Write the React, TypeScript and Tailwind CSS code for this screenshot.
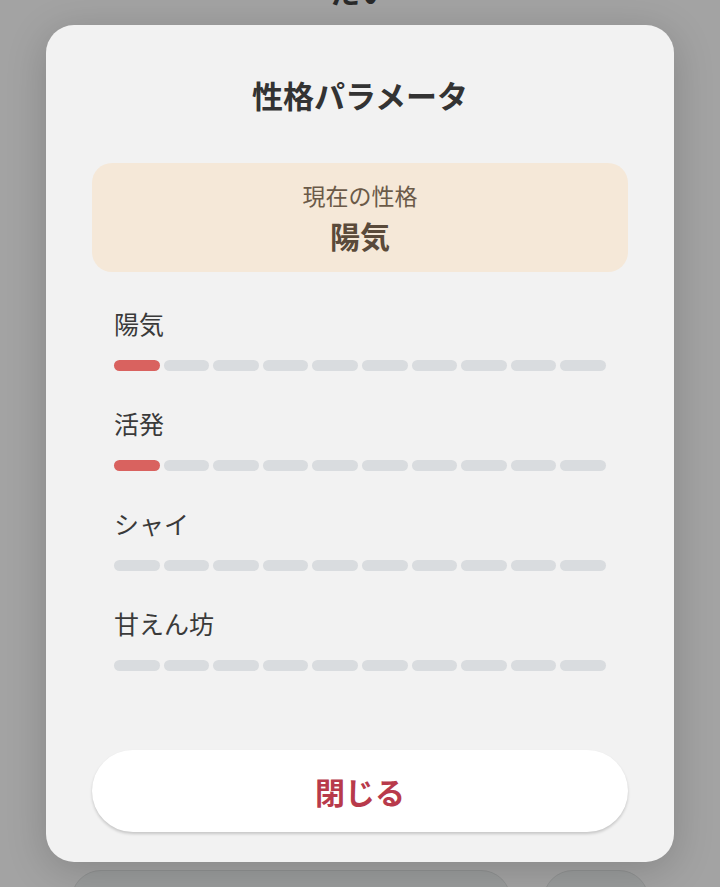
import React from "react";

const params = [
  { label: "陽気", value: 1 },
  { label: "活発", value: 1 },
  { label: "シャイ", value: 0 },
  { label: "甘えん坊", value: 0 },
];

function Bar({ value }: { value: number }) {
  return (
    <div className="flex gap-[4px]">
      {Array.from({ length: 10 }).map((_, i) => (
        <div
          key={i}
          className={
            i < value
              ? "h-[11px] flex-1 rounded-full bg-[#d9625f]"
              : "h-[11px] flex-1 rounded-full bg-[#d9dcdf]"
          }
        />
      ))}
    </div>
  );
}

export default function App() {
  return (
    <div
      className="relative w-[720px] h-[887px] overflow-hidden bg-[#a3a3a3]"
      style={{ fontFamily: '"Noto Sans CJK JP", "Noto Sans", sans-serif' }}
    >
      {/* dimmed background page */}
      <div className="flex flex-col items-center h-full">
        <div className="mt-[-30px] text-[30px] font-bold leading-[40px] text-[#2a2a2a]">たい</div>
        <div className="flex-1" />
        <div className="flex gap-[32px] w-full px-[71px] mb-[-43px]">
          <div className="h-[60px] w-[441px] rounded-[30px] bg-[#9a9c9c] border border-[#909292]" />
          <div className="h-[60px] w-[106px] rounded-[30px] bg-[#9a9c9c] border border-[#909292]" />
        </div>
      </div>

      {/* modal */}
      <div className="absolute left-[46px] top-[25px] w-[628px] h-[837px] rounded-[28px] bg-[#f2f2f2] shadow-[0_8px_40px_rgba(0,0,0,0.18)] px-[46px] pb-[30px] flex flex-col">
        <h2 className="mt-[50px] text-center text-[31px] leading-[40px] font-bold text-[#333333]">
          性格パラメータ
        </h2>

        <div className="mt-[48px] h-[109px] pb-[2px] rounded-[20px] bg-[#f5e8d8] flex flex-col items-center justify-center">
          <div className="text-[23px] leading-[28px] text-[#6b5a48]">現在の性格</div>
          <div className="mt-[8px] text-[30px] leading-[36px] font-bold text-[#5a4a3a]">陽気</div>
        </div>

        <div className="mt-[36px] px-[22px] flex flex-col gap-[37px]">
          {params.map((p) => (
            <div key={p.label} className="flex flex-col">
              <div className="text-[25px] leading-[30px] text-[#3a3a3a]">{p.label}</div>
              <div className="mt-[22px]">
                <Bar value={p.value} />
              </div>
            </div>
          ))}
        </div>

        <div className="flex-1" />

        <button className="h-[82px] w-full rounded-full bg-white shadow-[0_2px_3px_rgba(0,0,0,0.18)] text-[30px] font-bold text-[#b83a4b]">
          閉じる
        </button>
      </div>
    </div>
  );
}
